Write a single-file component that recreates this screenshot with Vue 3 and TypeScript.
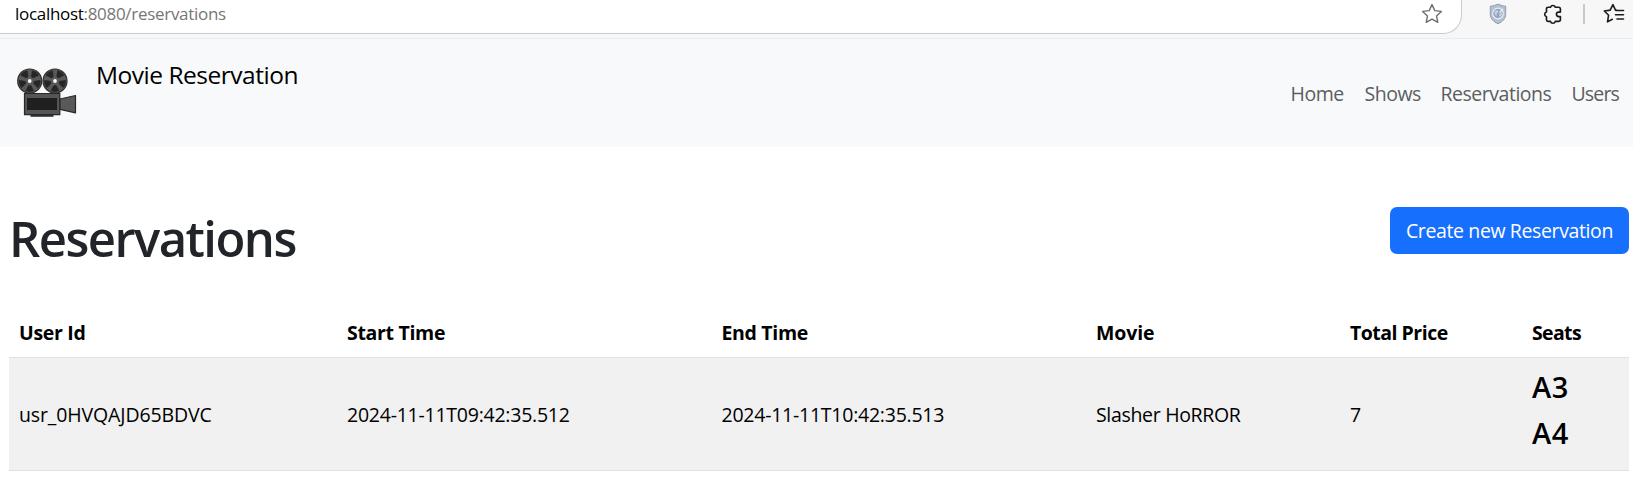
<script setup lang="ts">
interface Reservation {
  userId: string
  start: string
  end: string
  movie: string
  price: number
  seats: string[]
}

const reservations: Reservation[] = [
  {
    userId: 'usr_0HVQAJD65BDVC',
    start: '2024-11-11T09:42:35.512',
    end: '2024-11-11T10:42:35.513',
    movie: 'Slasher HoRROR',
    price: 7,
    seats: ['A3', 'A4'],
  },
]

const reels = [19.7, 45]
const blades = [0, 72, 144, 216, 288]
</script>

<template>
  <div class="page">
    <div class="toolbar">
      <div class="address">
        <div class="url"><span class="host">localhost</span>:8080/reservations</div>
        <svg class="fav" width="22" height="22" viewBox="0 0 22 22">
          <path d="M11 1.6l2.8 6 6.6.8-4.9 4.5 1.3 6.4L11 16.2l-5.8 3.1 1.3-6.4L1.6 8.4l6.6-.8z" fill="none" stroke="#6e6e6e" stroke-width="1.4" stroke-linejoin="round" />
        </svg>
      </div>
      <svg class="shield" width="18" height="22" viewBox="0 0 18 22">
        <path d="M9 1c2.5 1.300 5 2 7.7 2.200v8c0 4.500-3.200 7.500-7.700 9.600-4.500-2.100-7.700-5.100-7.700-9.600v-8C4 3 6.500 2.300 9 1z" fill="#b5bfd0" stroke="#929dae" stroke-width="1" />
        <circle cx="9" cy="10.5" r="5.3" fill="#91a3bd" stroke="#e9eef5" stroke-width="1.2" />
        <path d="M5.500 8.500l3-1.500 1 2-2 1.500.5 2.500-2-1zM10 11l3-2-.5 3.500-2 1.500z" fill="#c7d2e2" />
        <path d="M10.500 9.500l3.500-3.500" stroke="#e9eef5" stroke-width="1.4" />
      </svg>
      <svg class="puzzle" width="20" height="22" viewBox="0 0 20 22">
        <path d="M5.500 4.500h2.300a2.400 2.400 0 0 1 4.600 0h3.300a1.600 1.600 0 0 1 1.600 1.600v3h-1.600a2.200 2.200 0 0 0 0 4.400h1.600v3a1.600 1.600 0 0 1-1.600 1.600h-3.300a2.400 2.400 0 0 1-4.600 0H5.500a1.600 1.600 0 0 1-1.600-1.600v-2.900a2.400 2.400 0 0 1 0-4.600V6.100a1.600 1.600 0 0 1 1.600-1.600z" transform="translate(-.6 -.4) scale(1.04)" fill="none" stroke="#1b1b1b" stroke-width="1.6" stroke-linejoin="round" />
      </svg>
      <span class="divider"></span>
      <svg class="favlist" width="22" height="22" viewBox="0 0 22 22">
        <path d="M13.500 7.300l-1-.2L9.900 1.700 7.200 7.100l-5.900.9 4.300 4.200-1.100 6.700 4.800-2.600" fill="none" stroke="#1b1b1b" stroke-width="1.6" stroke-linejoin="round" stroke-linecap="round" />
        <path d="M13 7.500h7.500M12.500 11.700h8M14 16h6.500" stroke="#1b1b1b" stroke-width="1.6" stroke-linecap="round" />
      </svg>
    </div>

    <header class="navbar">
      <div class="brand">
        <svg class="camera" width="68" height="60" viewBox="0 0 68 60">
          <g v-for="x in reels" :key="x" :transform="`translate(${x} 21)`">
            <circle r="12" fill="#595959" stroke="#303030" stroke-width="1.2" />
            <path v-for="a in blades" :key="a" :transform="`rotate(${a + 36})`" d="M-1.300-4.200L-4.300-9.800Q0-12 4.300-9.800L1.300-4.200Z" fill="#262626" />
            <circle r="1.9" fill="#f8f9fa" />
          </g>
          <path d="M20.500 54.500h23v2.300h-23z" fill="#303030" />
          <path d="M14.500 33.500h35.300v21.200H14.500z" fill="#555" stroke="#282828" stroke-width="1.2" />
          <path d="M17 38h30v12H17z" fill="#202020" />
          <path d="M50 39l15.500-3.500v17.300L50 49.300z" fill="#595959" stroke="#282828" stroke-width="1.2" stroke-linejoin="round" />
        </svg>
        <span class="brand-name">Movie Reservation</span>
      </div>
      <nav class="links">
        <a class="home">Home</a>
        <a class="shows">Shows</a>
        <a class="res">Reservations</a>
        <a class="users">Users</a>
      </nav>
    </header>

    <main class="content">
      <div class="heading">
        <h1>Reservations</h1>
        <button type="button">Create new Reservation</button>
      </div>
      <table>
        <colgroup>
          <col class="c-user" /><col class="c-time" /><col class="c-time" />
          <col class="c-movie" /><col class="c-price" /><col class="c-seats" />
        </colgroup>
        <thead>
          <tr>
            <th>User Id</th>
            <th>Start Time</th>
            <th>End Time</th>
            <th class="wide">Movie</th>
            <th class="tight">Total Price</th>
            <th class="tighter">Seats</th>
          </tr>
        </thead>
        <tbody>
          <tr v-for="r in reservations" :key="r.userId">
            <td class="user">{{ r.userId }}</td>
            <td class="time">{{ r.start }}</td>
            <td class="time">{{ r.end }}</td>
            <td>{{ r.movie }}</td>
            <td>{{ r.price }}</td>
            <td class="seats"><h4 v-for="s in r.seats" :key="s">{{ s }}</h4></td>
          </tr>
        </tbody>
      </table>
    </main>
  </div>
</template>

<style>
body {
  margin: 0;
  background: #fff;
}
</style>

<style scoped>
.page {
  height: 482px;
  overflow: hidden;
  background: #fff;
  font-family: "Open Sans", "Noto Sans", sans-serif;
  font-size: 19.5px;
  color: #000;
}
.toolbar {
  box-sizing: border-box;
  height: 39px;
  display: flex;
  align-items: flex-start;
  background: #f7f7f7;
  border-bottom: 1px solid #ebebec;
}
.address {
  box-sizing: border-box;
  width: 1462px;
  height: 34px;
  display: flex;
  justify-content: space-between;
  background: #fff;
  border-right: 1px solid #cacaca;
  border-bottom: 1px solid #cacaca;
  border-bottom-right-radius: 19px;
  padding: 3px 18px 0 15px;
}
.url {
  font-size: 17px;
  line-height: 22px;
  letter-spacing: -0.3px;
  color: #767676;
}
.host {
  color: #000;
}
.shield {
  margin: 3px 0 0 27px;
}
.puzzle {
  margin: 3px 0 0 36px;
}
.divider {
  width: 2px;
  height: 20px;
  margin: 4px 0 0 20px;
  background: #c9c9c9;
}
.favlist {
  margin: 3px 0 0 18px;
}
.navbar {
  box-sizing: border-box;
  height: 108px;
  display: flex;
  justify-content: space-between;
  align-items: center;
  padding: 0 13px 0 10px;
  background: #f8f9fb;
}
.brand {
  display: flex;
  align-items: flex-start;
  height: 66px;
}
.camera {
  margin-right: 18px;
}
.brand-name {
  font-size: 24.5px;
  line-height: 30px;
  letter-spacing: -0.48px;
}
.links {
  display: flex;
  padding-top: 2px;
  color: #5c5d5e;
  line-height: 30px;
}
.links a {
  box-sizing: border-box;
  letter-spacing: -0.48px;
}
.links .home { width: 74px; }
.links .shows { width: 76px; }
.links .res { width: 131px; }
.links .users { width: 48.5px; letter-spacing: -0.85px; }
.content {
  padding: 60px 4px 0 9px;
}
.heading {
  display: flex;
  justify-content: space-between;
  align-items: flex-start;
  height: 97px;
}
h1 {
  margin: 1px 0 0;
  font-size: 49px;
  line-height: 60px;
  font-weight: 600;
  letter-spacing: -1.55px;
  color: #212529;
}
button {
  width: 239px;
  height: 47px;
  padding: 0;
  border: 0;
  border-radius: 7px;
  background: #176ffd;
  color: #fff;
  font: inherit;
  letter-spacing: -0.38px;
  white-space: nowrap;
}
table {
  width: 1620px;
  table-layout: fixed;
  border-collapse: separate;
  border-spacing: 0;
}
.c-user { width: 328px; }
.c-time { width: 374.5px; }
.c-movie { width: 254px; }
.c-price { width: 182px; }
.c-seats { width: 107px; }
th,
td {
  box-sizing: border-box;
  padding: 0 0 0 10px;
  text-align: left;
  border-bottom: 1px solid #dee2e6;
  letter-spacing: -0.32px;
}
th {
  height: 54px;
  padding-top: 4px;
  font-weight: 700;
}
th.wide { letter-spacing: -0.1px; }
th.tight { letter-spacing: -0.5px; }
th.tighter { letter-spacing: -0.65px; }
td {
  height: 113px;
  background: #f1f1f1;
  border-bottom-color: #dfe0e1;
}
td.user { letter-spacing: -0.12px; }
td.time { letter-spacing: -0.24px; }
td.seats {
  vertical-align: top;
  padding-top: 11px;
}
h4 {
  margin: 0 0 10px;
  font-size: 29px;
  line-height: 36px;
  font-weight: 600;
  letter-spacing: 0.6px;
}
</style>
